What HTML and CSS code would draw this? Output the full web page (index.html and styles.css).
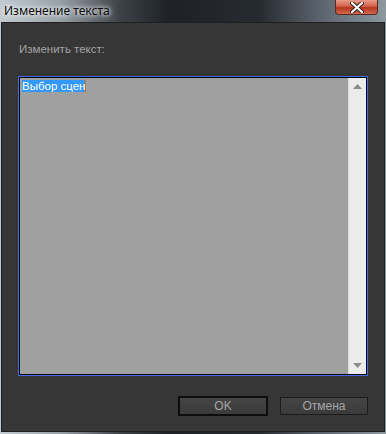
FILE: index.html
```html
<!DOCTYPE html>
<html>
<head>
  <meta charset="UTF-8">
  <title>Изменение текста</title>
  <link rel="stylesheet" href="styles.css">
</head>
<body>

  <div class="window">
    <div class="titlebar">
      <span class="title">Изменение текста</span>
      <div class="close">
        <svg width="14" height="11" viewBox="0 0 14 11">
          <path d="M2 1 L12 10 M12 1 L2 10" stroke="#2b1a18" stroke-width="4" stroke-linecap="round"/>
          <path d="M2 1 L12 10 M12 1 L2 10" stroke="#fff" stroke-width="2.2" stroke-linecap="round"/>
        </svg>
      </div>
    </div>

    <div class="dialog">
      <div class="label">Изменить текст:</div>

      <div class="editor">
        <div class="editor__text"><span class="selection">Выбор сцен</span><span class="caret"></span></div>
        <div class="scrollbar">
          <svg width="9" height="5" viewBox="0 0 9 5"><path d="M4.5 0 L9 5 L0 5 Z" fill="#8c8c8c"/></svg>
          <svg width="9" height="5" viewBox="0 0 9 5"><path d="M0 0 L9 0 L4.5 5 Z" fill="#8c8c8c"/></svg>
        </div>
      </div>

      <div class="buttons">
        <button class="btn btn--default">OK</button>
        <button class="btn">Отмена</button>
      </div>
    </div>
  </div>

</body>
</html>
```

FILE: styles.css
```css
body {
  margin: 0;
  background: #2a2d31;
  font-family: 'Liberation Sans', Arial, sans-serif;
}

.window {
  width: 386px;
  height: 434px;
  box-sizing: border-box;
  display: flex;
  flex-direction: column;
  background: linear-gradient(to right, #c3cbd2 0%, #98a0a8 60px, #3c4248 120px, #1e2227 170px, #262b31 260px, #5b646d 320px, #8e989f 386px);
  padding: 0 2px 3px 2px;
}

.titlebar {
  height: 23px;
  display: flex;
  justify-content: space-between;
  align-items: flex-start;
}

.title {
  font-family: 'Noto Sans', sans-serif;
  font-size: 12px;
  line-height: 21px;
  color: #0a0a0a;
  padding-left: 2px;
  text-shadow: 0 0 6px #fff, 0 0 4px #fff;
}

.close {
  width: 43px;
  height: 15px;
  margin-right: 6px;
  box-sizing: border-box;
  border: 1px solid #5a2a22;
  border-top: none;
  border-radius: 0 0 4px 4px;
  background: linear-gradient(to bottom, #e79a88 0%, #d0614a 45%, #b8341c 55%, #cf6a4e 100%);
  display: flex;
  justify-content: center;
  align-items: center;
}

.dialog {
  flex: 1;
  background: #363636;
  padding: 19px 16px 0 16px;
  box-shadow: 0 0 0 1px #1d2024;
}

.label {
  font-size: 11.5px;
  line-height: 14px;
  color: #a4a4a4;
  padding-left: 1px;
}

.editor {
  margin-top: 20px;
  width: 350px;
  height: 300px;
  box-sizing: border-box;
  border: 1px solid #3d6ee8;
  box-shadow: inset 0 0 0 1px #000;
  padding: 1px;
  display: flex;
  background: #a0a0a0;
}

.editor__text {
  flex: 1;
  padding: 1px 2px;
  font-size: 11.5px;
  line-height: 14px;
}

.selection {
  background: #3399ff;
  color: #fff;
}

.caret {
  display: inline-block;
  width: 1px;
  height: 14px;
  vertical-align: top;
  background: #e07000;
}

.scrollbar {
  width: 17px;
  background: #ececec;
  border-left: 1px solid #dcdcdc;
  display: flex;
  flex-direction: column;
  justify-content: space-between;
  align-items: center;
  padding: 6px 0 6px;
}

.buttons {
  display: flex;
  justify-content: flex-end;
  align-items: center;
  gap: 12px;
  margin-top: 20px;
}

.btn {
  width: 88px;
  height: 18px;
  box-sizing: border-box;
  border: 1px solid #1c1c1c;
  border-radius: 0;
  background: linear-gradient(to bottom, #454545 0%, #3a3a3a 100%);
  color: #a6a6a6;
  font-family: 'Liberation Sans', Arial, sans-serif;
  font-size: 12px;
  padding: 0;
  line-height: 15px;
}

.btn--default {
  width: 90px;
  height: 20px;
  border: 2px solid #0d0d0d;
}
```
